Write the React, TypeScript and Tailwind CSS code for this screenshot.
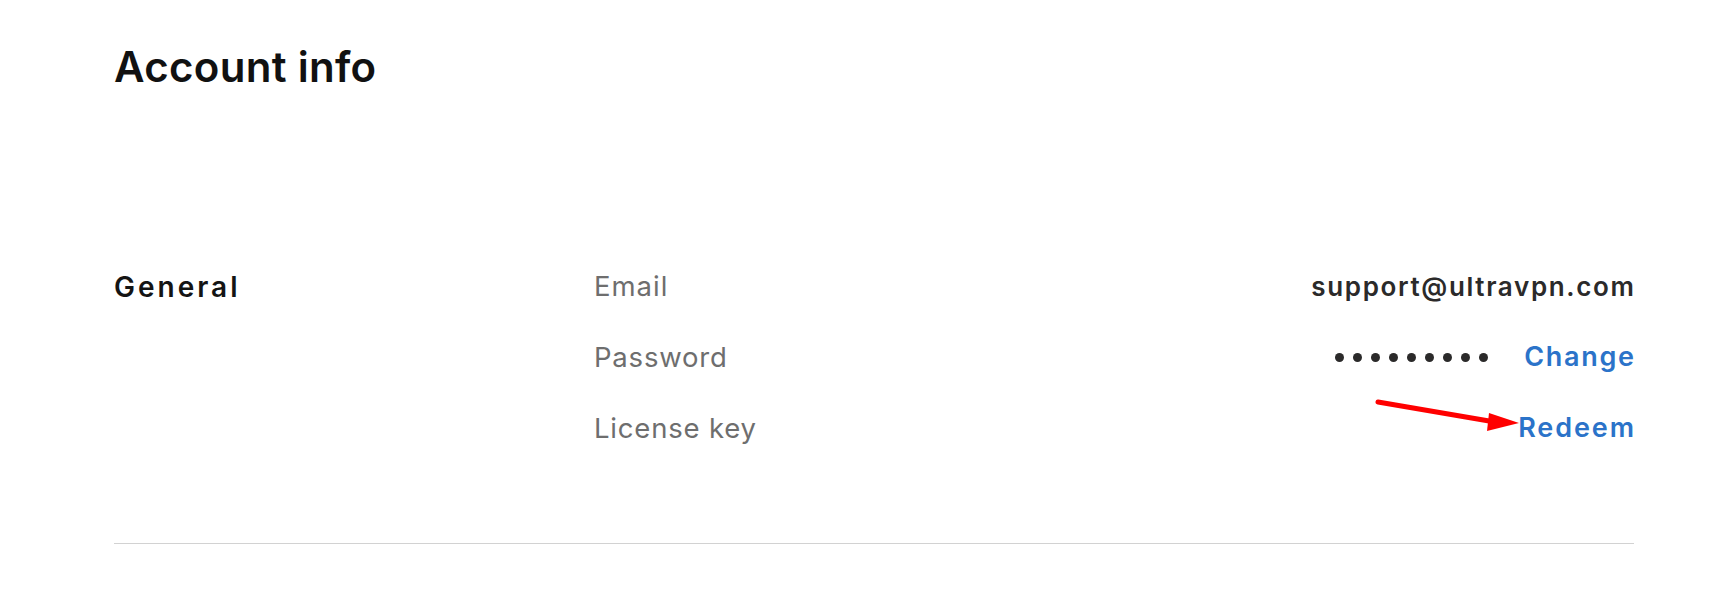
import React from "react";

function Dots() {
  return (
    <div className="flex items-center gap-[9px]">
      {Array.from({ length: 9 }).map((_, i) => (
        <span key={i} className="block w-[9px] h-[9px] rounded-full bg-[#2b2a2a]" />
      ))}
    </div>
  );
}

export default function App() {
  return (
    <div className="relative w-[1716px] h-[603px] bg-white pl-[114px] pt-[41px] font-['Inter',sans-serif] overflow-hidden">
      <div className="w-[1520px]">
        <h1 className="text-[42px] leading-[52px] font-semibold text-[#111111] tracking-[0.3px]">Account info</h1>
        <div className="mt-[158px] flex">
          <div className="w-[480px] h-[71px] flex items-center text-[28px] font-semibold text-[#141414] tracking-[3px]">General</div>
          <div className="flex-1 flex flex-col">
            <div className="h-[71px] flex items-center justify-between">
              <span className="text-[27.5px] text-[#6e6e6e] tracking-[1px]">Email</span>
              <span className="text-[26px] font-semibold text-[#2b2a2a] tracking-[1.65px] mr-[-1.65px]">support@ultravpn.com</span>
            </div>
            <div className="h-[71px] flex items-center justify-between">
              <span className="text-[27.5px] text-[#6e6e6e] tracking-[0.8px]">Password</span>
              <div className="flex items-center gap-[36px]">
                <Dots />
                <span className="text-[27px] font-semibold text-[#2b73c9] tracking-[1.7px] mr-[-1.7px]">Change</span>
              </div>
            </div>
            <div className="h-[71px] flex items-center justify-between">
              <span className="text-[27.5px] text-[#6e6e6e] tracking-[0.8px]">License key</span>
              <span className="text-[27px] font-semibold text-[#2b73c9] tracking-[1.9px] mr-[-1.9px]">Redeem</span>
            </div>
          </div>
        </div>
        <div className="mt-[79px] h-px bg-[#d2d2d2]" />
      </div>
      <svg className="absolute left-0 top-0 pointer-events-none" width="1716" height="603">
        <line x1="1378" y1="402" x2="1495" y2="422" stroke="#ff0000" strokeWidth="5" strokeLinecap="round" />
        <polygon points="1519,423 1489,413 1487,431" fill="#ff0000" />
      </svg>
    </div>
  );
}
